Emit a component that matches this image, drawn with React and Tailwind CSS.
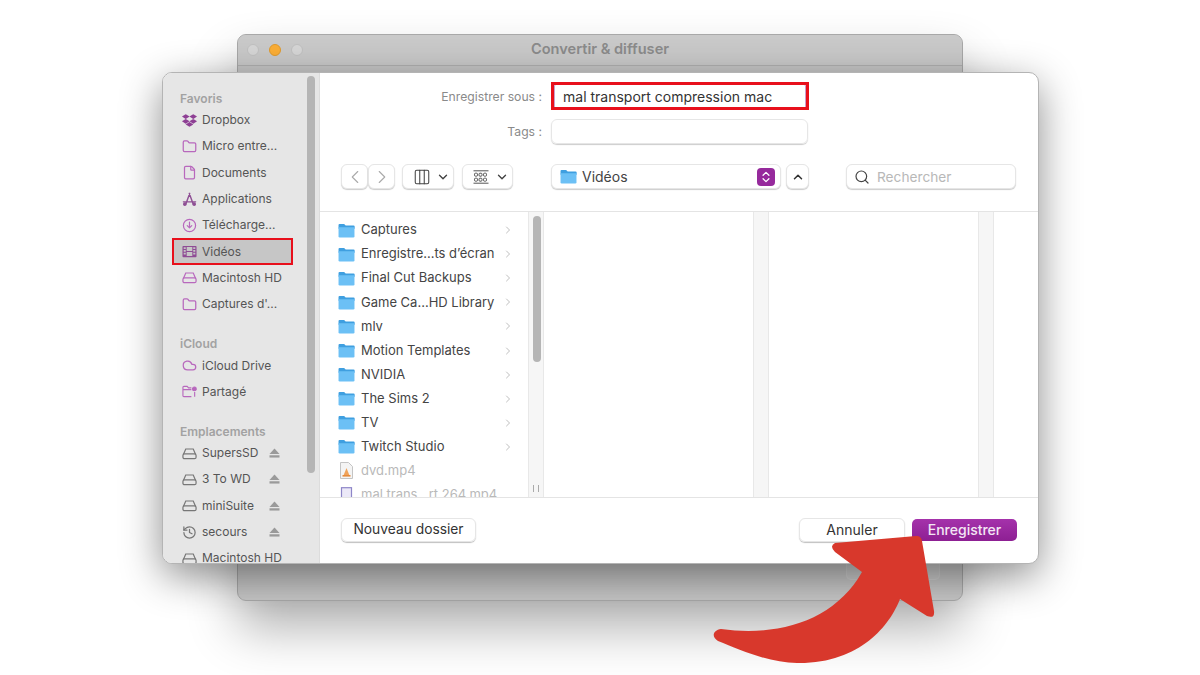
import { ChevronDown, ChevronLeft, ChevronRight, ChevronUp, ChevronsUpDown, Cloud, Columns3, File, Folder, History, Search } from "lucide-react";
import { FaDropbox } from "react-icons/fa";

const font = { fontFamily: "Inter, 'Liberation Sans', sans-serif" };

function Drive({ className }) {
  return (
    <svg viewBox="0 0 16 14" className={className} fill="none" stroke="currentColor" strokeWidth="1.3">
      <path d="M1.5 8 4 2.2h8L14.5 8" />
      <rect x="1" y="7.5" width="14" height="5" rx="1.6" />
    </svg>
  );
}

function Film({ className }) {
  return (
    <svg viewBox="0 0 16 14" className={className} fill="currentColor">
      <path fillRule="evenodd" d="M1.5 1h13a1 1 0 0 1 1 1v10a1 1 0 0 1-1 1h-13a1 1 0 0 1-1-1V2a1 1 0 0 1 1-1ZM5 2.2v4.2h6V2.2H5Zm0 5.4v4.2h6V7.6H5ZM1.8 2.4v1.8H4V2.4H1.8Zm0 3v1.8H4V5.4H1.8Zm0 3v1.8H4V8.4H1.8Zm10.2-6v1.8h2.2V2.4H12Zm0 3v1.8h2.2V5.4H12Zm0 3v1.8h2.2V8.4H12Z" />
    </svg>
  );
}

function Apps({ className }) {
  return (
    <svg viewBox="0 0 16 16" className={className} fill="none" stroke="currentColor" strokeWidth="1.5" strokeLinecap="round">
      <path d="M8.2 1.5 4 13M7.8 1.5 12 13M1.5 10.5h13" />
      <circle cx="3" cy="13" r="1.2" fill="currentColor" />
      <circle cx="13" cy="13" r="1.2" fill="currentColor" />
    </svg>
  );
}

function DownloadCircle({ className }) {
  return (
    <svg viewBox="0 0 16 16" className={className} fill="none" stroke="currentColor" strokeWidth="1.3" strokeLinecap="round" strokeLinejoin="round">
      <circle cx="8" cy="8" r="6.5" />
      <path d="M8 4.5v6M5.6 8.2 8 10.6l2.4-2.4" />
    </svg>
  );
}

function Shared({ className }) {
  return (
    <svg viewBox="0 0 16 14" className={className} fill="none" stroke="currentColor" strokeWidth="1.2">
      <path d="M10 12.5H2a1 1 0 0 1-1-1V2.5a1 1 0 0 1 1-1h3.5l1.5 1.6h3M1 5h9" />
      <path d="M13.5 7.5v5" />
      <circle cx="13.2" cy="4.2" r="2" fill="currentColor" />
    </svg>
  );
}

function Eject() {
  return (
    <svg viewBox="0 0 12 11" className="w-[11px] h-[10px] text-[#9a9a9a]" fill="currentColor">
      <path d="M6 0.5 11.5 6.5H0.5Z" />
      <rect x="0.5" y="8" width="11" height="2.5" />
    </svg>
  );
}

function GridIcon() {
  return (
    <svg viewBox="0 0 16 14" className="w-[16px] h-[14px] text-[#555]" fill="none" stroke="currentColor" strokeWidth="1">
      <path d="M0.5 0.8h15M0.5 13.2h15" />
      {[1.5, 6, 10.5].map((x) =>
        [3.2, 8.2].map((y) => <rect key={`${x}-${y}`} x={x} y={y} width="3" height="3" rx="1" />)
      )}
    </svg>
  );
}

function BlueFolder({ className }) {
  return (
    <svg viewBox="0 0 18 16" className={className}>
      <path d="M1.5 1h5l1.6 1.6h8.4a1.2 1.2 0 0 1 1.2 1.2V6H.5V2A1 1 0 0 1 1.5 1Z" fill="#3f9fe0" />
      <path d="M.5 4.4h17v9.8a1.3 1.3 0 0 1-1.3 1.3H1.8a1.3 1.3 0 0 1-1.3-1.3Z" fill="#6cc0f5" />
    </svg>
  );
}

function VlcFile() {
  return (
    <svg viewBox="0 0 14 17" className="w-[17px] h-[17px] shrink-0">
      <path d="M1 .5h8l4 4v12H1Z" fill="#f4f4f4" stroke="#c4c4c4" />
      <path d="M7 6 9.8 13H4.2Z" fill="#f0a35a" />
      <rect x="3" y="13" width="8" height="1.6" fill="#e58b3c" />
    </svg>
  );
}

function MovieFile() {
  return (
    <svg viewBox="0 0 14 17" className="w-[17px] h-[17px] shrink-0">
      <rect x="2" y="0.7" width="10" height="15.6" fill="#ece9f8" stroke="#8e86c8" strokeWidth="1.2" />
    </svg>
  );
}

const purple = "text-[#b868bd]";
const favorites = [
  { Icon: FaDropbox, label: "Dropbox", tone: "text-[#8e3f94]" },
  { Icon: Folder, label: "Micro entre..." },
  { Icon: File, label: "Documents" },
  { Icon: Apps, label: "Applications", tone: "text-[#8e4f94]" },
  { Icon: DownloadCircle, label: "Télécharge..." },
  { Icon: Film, label: "Vidéos", tone: "text-[#8f4c95]", active: true },
  { Icon: Drive, label: "Macintosh HD" },
  { Icon: Folder, label: "Captures d'..." },
];
const icloud = [
  { Icon: Cloud, label: "iCloud Drive" },
  { Icon: Shared, label: "Partagé" },
];
const places = [
  { Icon: Drive, label: "SupersSD", eject: true, tone: "text-[#777]" },
  { Icon: Drive, label: "3 To WD", eject: true, tone: "text-[#777]" },
  { Icon: Drive, label: "miniSuite", eject: true, tone: "text-[#777]" },
  { Icon: History, label: "secours", eject: true, tone: "text-[#777]" },
  { Icon: Drive, label: "Macintosh HD", tone: "text-[#777]" },
];
const folders = ["Captures", "Enregistre...ts d’écran", "Final Cut Backups", "Game Ca...HD Library", "mlv", "Motion Templates", "NVIDIA", "The Sims 2", "TV", "Twitch Studio"];

function SideRow({ Icon, label, tone, active, eject }) {
  return (
    <div className={`relative h-[26.3px] shrink-0 flex items-center pl-[9px] ml-[9px] w-[121px] ${active ? "bg-[#c6c6c6]" : ""}`}>
      {active && <div className="absolute inset-0 border-2 border-[#e8101c]" />}
      <span className="w-[16px] flex justify-center shrink-0">
        <Icon className={`w-[15px] h-[15px] ${tone || purple}`} strokeWidth={2} />
      </span>
      <span className="ml-[5px] text-[12px] text-[#555] whitespace-nowrap">{label}</span>
      {eject && <span className="absolute left-[97px] top-[8px]"><Eject /></span>}
    </div>
  );
}

function SideTitle({ children, className }) {
  return <div className={`pl-[17px] text-[12px] font-semibold text-[#a2a2a2] ${className}`}>{children}</div>;
}

function ToolButton({ className, children }) {
  return (
    <div className={`h-[25px] flex items-center bg-white rounded-[6px] border border-[#e6e6e6] shadow-[0_1px_1px_rgba(0,0,0,0.2)] ${className}`}>
      {children}
    </div>
  );
}

function FileColumn({ width, children }) {
  return (
    <>
      <div className={`${width} shrink-0 bg-white overflow-hidden`}>{children}</div>
      <div className="w-[16px] shrink-0 bg-[#f6f6f6] border-x border-[#e8e8e8]" />
    </>
  );
}

export default function App() {
  return (
    <div style={font} className="relative w-[1200px] h-[675px] bg-white overflow-hidden">
      {/* window behind the dialog */}
      <div className="absolute left-[237px] top-[34px] w-[726px] h-[567px] rounded-[9px] border border-[#a8a8a8] bg-[#c6c6c6] shadow-[0_28px_50px_rgba(0,0,0,0.3)] overflow-hidden flex flex-col">
        <div className="h-[30px] shrink-0 bg-[#c9c9c9] flex items-center relative">
          <div className="flex gap-[10px] pl-[9px]">
            <span className="w-[12px] h-[12px] rounded-full bg-[#d6d6d6] border border-[#c0c0c0]" />
            <span className="w-[12px] h-[12px] rounded-full bg-[#fbae36] border border-[#e09a2c]" />
            <span className="w-[12px] h-[12px] rounded-full bg-[#d6d6d6] border border-[#c0c0c0]" />
          </div>
          <span className="absolute inset-x-0 text-center text-[14.6px] font-semibold text-[#8b8b8b]">Convertir &amp; diffuser</span>
        </div>
        <div className="flex-1 border-t border-[#b0b0b0] flex flex-col justify-end items-end pb-[20px] pr-[22px]">
          <div className="w-[94px] h-[17px] rounded-b-[5px] bg-white/10 border border-white/10" />
        </div>
      </div>

      {/* save dialog */}
      <div className="absolute left-[162px] top-[72px] w-[877px] h-[492px] rounded-[10px] border border-[#b4b4b4] bg-white shadow-[0_12px_40px_rgba(0,0,0,0.45)] overflow-hidden flex">
        <aside className="relative w-[157px] shrink-0 bg-[#e6e6e6] border-r border-[#dcdcdc] overflow-hidden flex flex-col pt-[18px]">
          <div className="absolute left-[144px] top-[3px] w-[8px] h-[397px] rounded-full bg-[#b5b5b5]" />
          <SideTitle className="h-[16px] leading-[16px]">Favoris</SideTitle>
          {favorites.map((f) => <SideRow key={f.label + f.tone} {...f} />)}
          <SideTitle className="h-[16px] leading-[16px] mt-[19px]">iCloud</SideTitle>
          {icloud.map((f) => <SideRow key={f.label} {...f} />)}
          <SideTitle className="h-[16px] leading-[16px] mt-[19px]">Emplacements</SideTitle>
          {places.map((f) => <SideRow key={f.label} {...f} />)}
        </aside>

        <main className="flex-1 min-w-0 flex flex-col">
          <section className="h-[139px] shrink-0 border-b border-[#e4e4e4] pt-[11px]">
            <div className="flex items-center h-[25px]">
              <label className="w-[222px] pt-[2px] text-right text-[12.2px] text-[#8a8a8a]">Enregistrer sous :</label>
              <div className="relative ml-[9px] w-[258px] h-[25px] px-[12px] flex items-center text-[14px] text-[#333] bg-white">
                mal transport compression mac
                <div className="absolute inset-x-[3px] inset-y-0 rounded-[2px] border border-[#c9a0cc]" />
                <div className="absolute -top-[2px] -bottom-[1px] inset-x-0 border-[3px] border-[#e8101c]" />
              </div>
            </div>
            <div className="flex items-center h-[25px] mt-[10px]">
              <label className="w-[222px] pt-[2px] text-right text-[12.2px] text-[#8a8a8a]">Tags :</label>
              <div className="ml-[9px] w-[257px] h-[25px] rounded-[6px] border border-[#e6e6e6] shadow-[0_1px_1px_rgba(0,0,0,0.2)]" />
            </div>
            <div className="flex items-center mt-[20px] pl-[21px]">
              <ToolButton className="w-[27px] justify-center text-[#aaa]"><ChevronLeft size={22} strokeWidth={1.2} /></ToolButton>
              <ToolButton className="w-[27px] justify-center text-[#aaa]"><ChevronRight size={22} strokeWidth={1.2} /></ToolButton>
              <ToolButton className="w-[52px] ml-[7px] pl-[10px] gap-[5px] text-[#444]">
                <Columns3 size={18} strokeWidth={1.4} />
                <ChevronDown size={14} strokeWidth={2.4} />
              </ToolButton>
              <ToolButton className="w-[51px] ml-[8px] pl-[10px] gap-[6px] text-[#444]">
                <GridIcon />
                <ChevronDown size={14} strokeWidth={2.4} />
              </ToolButton>
              <ToolButton className="w-[230px] ml-[38px] pl-[8px] pr-[5px] justify-between">
                <span className="flex items-center gap-[5px] text-[14px] text-[#444]">
                  <BlueFolder className="w-[17px] h-[15px]" />
                  Vidéos
                </span>
                <span className="w-[18px] h-[18px] rounded-[4px] bg-[#962a9c] flex items-center justify-center text-white">
                  <ChevronsUpDown size={14} strokeWidth={2.2} />
                </span>
              </ToolButton>
              <ToolButton className="w-[23px] ml-[5px] justify-center text-[#333]"><ChevronUp size={14} strokeWidth={2.6} /></ToolButton>
              <ToolButton className="w-[170px] ml-[37px] pl-[7px] gap-[7px]">
                <Search size={16} strokeWidth={1.8} className="text-[#444]" />
                <span className="pt-[1px] text-[13.7px] text-[#b8b8b8]">Rechercher</span>
              </ToolButton>
            </div>
          </section>

          <section className="relative h-[285px] shrink-0 flex overflow-hidden">
            <FileColumn width="w-[208px]">
              <div className="pt-[6px] pl-[18px]">
                {folders.map((name) => (
                  <div key={name} className="h-[24.1px] flex items-center">
                    <BlueFolder className="w-[17px] h-[15px] shrink-0" />
                    <span className="ml-[6px] text-[13px] text-[#444] whitespace-nowrap">{name}</span>
                    <ChevronRight size={12} strokeWidth={1.5} className="ml-auto mr-[14px] text-[#aaa]" />
                  </div>
                ))}
                <div className="h-[24.1px] flex items-center text-[13px] text-[#b9b9b9]">
                  <VlcFile />
                  <span className="ml-[6px]">dvd.mp4</span>
                </div>
                <div className="h-[24.1px] flex items-center text-[13px] text-[#b9b9b9] whitespace-nowrap">
                  <MovieFile />
                  <span className="ml-[6px]">mal trans...rt 264.mp4</span>
                </div>
              </div>
            </FileColumn>
            <div className="absolute left-[213px] top-[4px] w-[8px] h-[146px] rounded-full bg-[#b5b5b5]" />
            <div className="absolute left-[213px] bottom-[5px] w-[6px] h-[7px] border-x border-[#aaa]" />
            <FileColumn width="w-[209px]" />
            <FileColumn width="w-[209px]" />
          </section>

          <footer className="flex-1 border-t border-[#e4e4e4] flex items-center pl-[21px] pr-[21px] pb-[2px]">
            <div className="w-[135px] h-[24px] rounded-[6px] border border-[#e6e6e6] shadow-[0_1px_1px_rgba(0,0,0,0.25)] flex items-center justify-center text-[13.8px] text-[#333]">
              Nouveau dossier
            </div>
            <div className="ml-auto w-[106px] h-[24px] rounded-[6px] border border-[#e6e6e6] shadow-[0_1px_1px_rgba(0,0,0,0.25)] flex items-center justify-center text-[14px] text-[#333]">
              Annuler
            </div>
            <div className="ml-[7px] w-[105px] h-[22px] rounded-[5px] bg-gradient-to-b from-[#a532ab] to-[#8d1f93] flex items-center justify-center text-[14px] font-medium text-[#f3e6f4]">
              Enregistrer
            </div>
          </footer>
        </main>
      </div>

      {/* annotation arrow */}
      <svg viewBox="700 520 240 150" className="absolute left-[700px] top-[520px] w-[240px] h-[150px]">
        <path
          fill="#d8382c"
          d="M835 543 L916 536 Q921 535.5 922 541 L934 611 Q935 619 927 616 L900 599 C890 625 860 664 797 663 C770 663 740 650 718 641 C711 637 713 630 721 629 C780 637 835 620 862 572 L835 552 Q829 546 835 543 Z"
        />
      </svg>
    </div>
  );
}
